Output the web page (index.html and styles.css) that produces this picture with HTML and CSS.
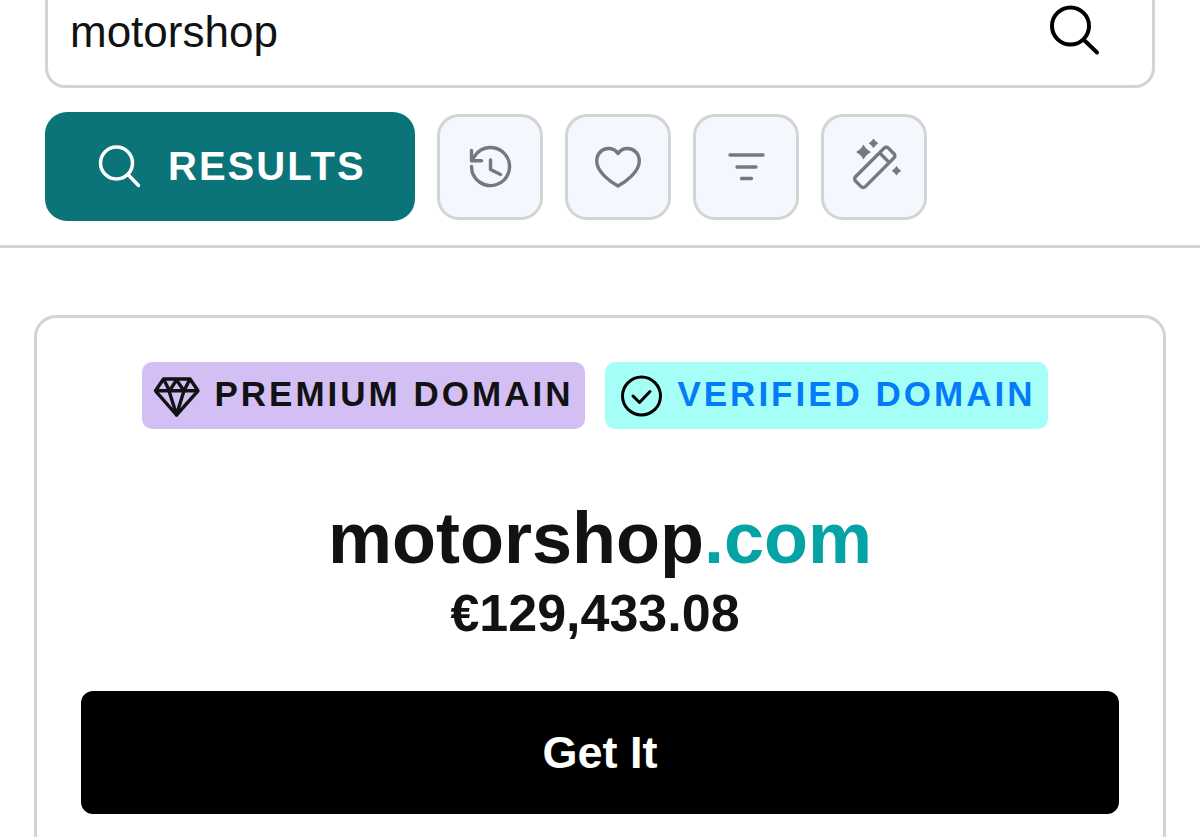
FILE: index.html
```html
<!DOCTYPE html>
<html lang="en">
<head>
  <meta charset="UTF-8" />
  <meta name="viewport" content="width=device-width, initial-scale=1" />
  <title>motorshop - Domain Search</title>
  <link rel="stylesheet" href="styles.css">
</head>
<body>
  <header class="search-header">
    <form class="search-box" role="search">
      <input class="search-input" type="text" name="q" value="motorshop" aria-label="Search domains" />
      <button class="search-submit" type="submit" aria-label="Search">
        <svg viewBox="0 0 50 50" fill="none" stroke="currentColor" stroke-width="4" stroke-linecap="round">
          <circle cx="20.500" cy="19" r="18.500" />
          <path d="M33.500 32.500 47 45.500" />
        </svg>
      </button>
    </form>

    <nav class="toolbar">
      <button class="results-btn" type="button">
        <svg viewBox="0 0 52 52" fill="none" stroke="currentColor" stroke-width="3.5" stroke-linecap="round">
          <circle cx="22.500" cy="22" r="16" />
          <path d="M34 33.500 44.500 44.500" />
        </svg>
        <span>RESULTS</span>
      </button>
      <button class="icon-btn" type="button" aria-label="History">
        <svg viewBox="0 0 52 52" fill="none" stroke="currentColor" stroke-width="3.4" stroke-linecap="round" stroke-linejoin="round">
          <path d="M7.5 25.5a19 19 0 1 0 3-10.2L7.8 19.5" />
          <path d="M7.5 9.5v10.3h10" />
          <path d="M26.5 19v9.5l10 5" />
        </svg>
      </button>
      <button class="icon-btn" type="button" aria-label="Favourites">
        <svg viewBox="0 0 52 52" fill="none" stroke="currentColor" stroke-width="3.4" stroke-linejoin="round">
          <path d="M26 45C18.500 41 4.700 31 4.700 20C4.700 12.500 10 7.500 16.500 7.500C20.500 7.500 24 9.500 26 12.500C28 9.500 31.500 7.500 35.500 7.500C42 7.500 47.300 12.500 47.300 20C47.300 31 33.500 41 26 45Z" />
        </svg>
      </button>
      <button class="icon-btn" type="button" aria-label="Filters">
        <svg viewBox="0 0 52 52" fill="none" stroke="currentColor" stroke-width="3.4" stroke-linecap="round">
          <path d="M10 14h33M17 26h19M21.500 37.500h10" />
        </svg>
      </button>
      <button class="icon-btn" type="button" aria-label="Generator">
        <svg viewBox="-1 1 52 52" fill="none" stroke="currentColor" stroke-width="3.4" stroke-linejoin="round">
          <path d="M6.500 36.800 35.200 8.100a3 3 0 0 1 4.200 0l5.600 5.600a3 3 0 0 1 0 4.200L16.300 46.600a3 3 0 0 1-4.200 0l-5.600-5.600a3 3 0 0 1 0-4.200Z" />
          <path d="M30.500 12.800 40.300 22.600" />
          <g fill="currentColor" stroke="none">
            <path d="M14.500 4.500q2.500 5 7.500 7.500-5 2.500-7.500 7.500-2.500-5-7.500-7.500 5-2.500 7.500-7.500Z" />
            <path d="M24.500-1.500q1.800 3 4.800 4.800-3 1.800-4.800 4.800-1.800-3-4.800-4.800 3-1.800 4.800-4.800Z" />
            <path d="M47.500 26q1.800 3 4.800 4.800-3 1.800-4.800 4.800-1.800-3-4.800-4.800 3-1.800 4.800-4.800Z" />
          </g>
        </svg>
      </button>
    </nav>
  </header>

  <main>
    <article class="domain-card">
      <div class="badges">
        <span class="badge premium">
          <svg viewBox="0 0 48 48" fill="none" stroke="currentColor" stroke-width="3.4" stroke-linejoin="round">
            <path d="M9.500 7h26.500l8 11.800L22.500 43 1.500 18.800Z" />
            <path d="M1.500 18.800h42.500" />
            <path d="M9.500 7l6 11.800L22.500 8l7.500 10.800L36 7" />
            <path d="M15 18.800l7.500 24 7.500-24" />
          </svg>
          <span class="badge-label">PREMIUM DOMAIN</span>
        </span>
        <span class="badge verified">
          <svg viewBox="0 0 48 48" fill="none" stroke="#000" stroke-width="3" stroke-linecap="round" stroke-linejoin="round">
            <circle cx="24.500" cy="24" r="19" />
            <path d="M16 24l6.500 6.500 10.500-11" />
          </svg>
          <span class="badge-label">VERIFIED DOMAIN</span>
        </span>
      </div>
      <h1 class="domain-name">motorshop<span class="tld">.com</span></h1>
      <p class="price">€129,433.08</p>
      <button class="get-btn" type="button">Get It</button>
    </article>
  </main>
</body>
</html>
```
FILE: styles.css
```css
:root {
  --teal: #0a7479;
  --teal-light: #05a3a6;
  --text: #111214;
  --icon: #75797d;
  --border: #d1d5d6;
}
* {
  box-sizing: border-box;
}
body {
  margin: 0;
  font-family: "Liberation Sans", Arial, sans-serif;
  background: #fff;
  color: var(--text);
}
button,
input {
  font-family: inherit;
  color: inherit;
}
button {
  display: flex;
  align-items: center;
  justify-content: center;
  padding: 0;
  border: none;
  cursor: pointer;
}
svg {
  display: block;
  flex: none;
  overflow: visible;
}

/* Search */
.search-header {
  padding: 0 45px 24px;
  border-bottom: 3px solid var(--border);
}
.search-box {
  display: flex;
  align-items: center;
  padding: 0 52px 22px 22px;
  border: 3px solid var(--border);
  border-top: none;
  border-radius: 0 0 20px 20px;
}
.search-input {
  flex: 1;
  min-width: 0;
  height: 63px;
  padding: 0;
  border: none;
  outline: none;
  background: none;
  font-size: 44px;
}
.search-submit {
  background: none;
  color: #000;
}
.search-submit svg {
  width: 50px;
  height: 50px;
}

/* Toolbar */
.toolbar {
  display: flex;
  align-items: center;
  gap: 22px;
  margin-top: 24px;
}
.results-btn {
  gap: 22px;
  height: 109px;
  padding: 0 49px;
  border-radius: 22px;
  background: var(--teal);
  color: #fff;
  font-size: 40px;
  font-weight: 700;
  letter-spacing: 2px;
}
.results-btn svg,
.icon-btn svg {
  width: 52px;
  height: 52px;
}
.icon-btn {
  width: 106px;
  height: 106px;
  border: 3px solid var(--border);
  border-radius: 22px;
  background: #f4f7fe;
  color: var(--icon);
}

/* Result card */
main {
  padding: 67px 34px;
}
.domain-card {
  padding: 44px;
  border: 3px solid var(--border);
  border-radius: 22px;
  text-align: center;
}
.badges {
  display: flex;
  flex-wrap: wrap;
  justify-content: center;
  gap: 10px;
}
.badge {
  display: flex;
  align-items: center;
  gap: 12px;
  height: 67px;
  margin-right: 10px;
  padding: 0 12px;
  border-radius: 10px;
  font-size: 35px;
  font-weight: 700;
  letter-spacing: 3px;
}
.badge svg {
  width: 48px;
  height: 48px;
}
.badge-label {
  padding-bottom: 4px;
}
.premium {
  background: #d3bff4;
}
.verified {
  background: #a6fff6;
  color: #047bf8;
}
.domain-name {
  margin: 67px 0 0;
  font-size: 72px;
  line-height: 84px;
}
.tld {
  color: var(--teal-light);
}
.price {
  margin: 0 10px 45px 0;
  font-size: 52px;
  font-weight: 700;
  line-height: 66px;
}
.get-btn {
  width: 100%;
  height: 123px;
  border-radius: 12px;
  background: #000;
  color: #fff;
  font-size: 45px;
  font-weight: 700;
}
```
